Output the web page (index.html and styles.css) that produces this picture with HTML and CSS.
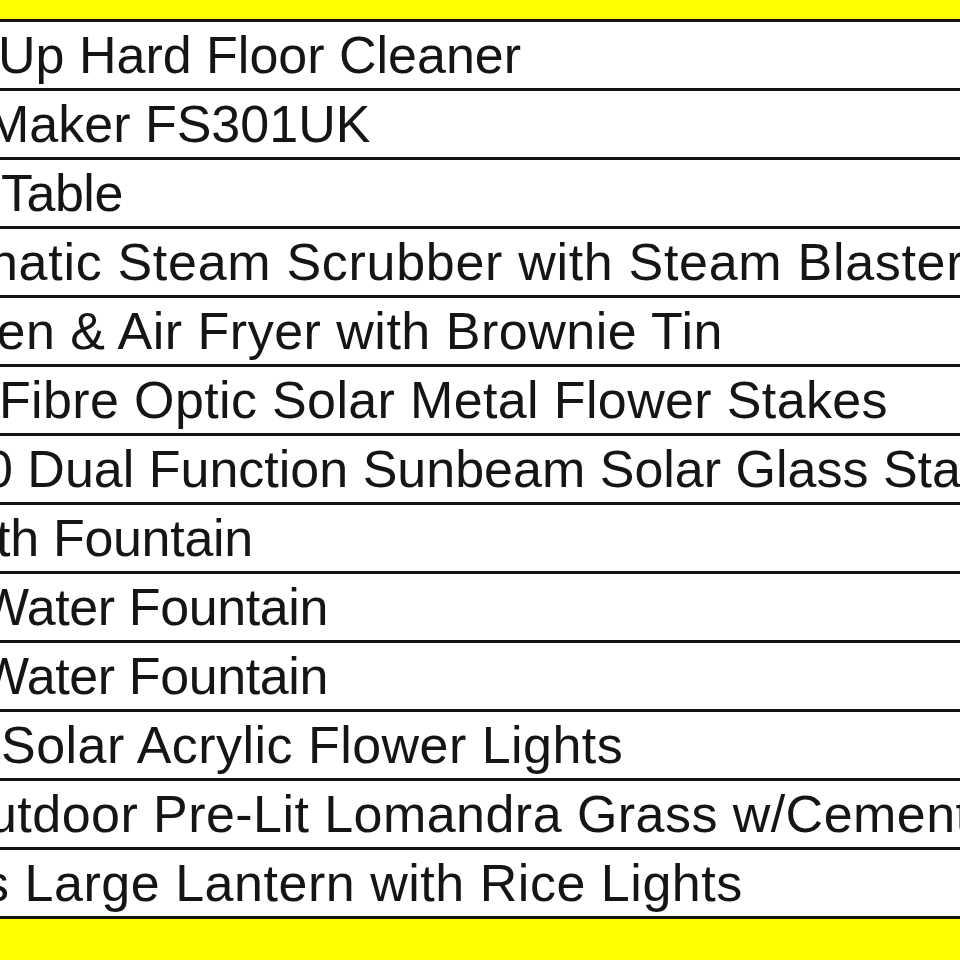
FILE: index.html
```html
<!DOCTYPE html>
<html lang="en">
<head>
<meta charset="utf-8">
<title>Product list</title>
<link rel="stylesheet" href="styles.css">
</head>
<body>
<div class="band band-top"></div>
<div class="list">
  <div class="row"><span class="name o1">Up Hard Floor Cleaner</span></div>
  <div class="row"><span class="name o2">Maker FS301UK</span></div>
  <div class="row"><span class="name o3">Table</span></div>
  <div class="row"><span class="name o4">natic Steam Scrubber with Steam Blaster</span></div>
  <div class="row"><span class="name o5">en &amp; Air Fryer with Brownie Tin</span></div>
  <div class="row"><span class="name o6">Fibre Optic Solar Metal Flower Stakes</span></div>
  <div class="row"><span class="name o7">0 Dual Function Sunbeam Solar Glass Stakes</span></div>
  <div class="row"><span class="name o8">th Fountain</span></div>
  <div class="row"><span class="name o9">Water Fountain</span></div>
  <div class="row"><span class="name o9">Water Fountain</span></div>
  <div class="row"><span class="name o11">Solar Acrylic Flower Lights</span></div>
  <div class="row"><span class="name o12">utdoor Pre-Lit Lomandra Grass w/Cement Pot</span></div>
  <div class="row"><span class="name o13">s Large Lantern with Rice Lights</span></div>
</div>
<div class="band band-bottom"></div>
</body>
</html>
```
FILE: styles.css
```css
html, body {
  margin: 0;
  padding: 0;
  background: #ffff00;
  width: 960px;
  height: 960px;
  overflow: hidden;
}
body {
  display: flex;
  flex-direction: column;
  font-family: "Liberation Sans", Arial, sans-serif;
}
.band-top {
  height: 19px;
  flex: none;
}
.band-bottom {
  flex: 1;
}
.list {
  background: #ffffff;
  border-bottom: 3px solid #141414;
  flex: none;
}
.row {
  height: 66px;
  border-top: 3px solid #141414;
  display: flex;
  align-items: center;
  overflow: hidden;
  white-space: nowrap;
}
.name {
  font-size: 52px;
  line-height: 58px;
  color: #151515;
  flex: none;
}
.o1 { margin-left: -2px; }
.o2 { margin-left: -14px; }
.o3 { margin-left: 1px; letter-spacing: -0.5px; }
.o4 { margin-left: -11px; letter-spacing: 0.7px; }
.o5 { margin-left: -3.5px; letter-spacing: 0.5px; }
.o6 { margin-left: -1px; letter-spacing: 0.36px; }
.o7 { margin-left: -16px; }
.o8 { margin-left: -4px; letter-spacing: -0.3px; }
.o9 { margin-left: -20px; letter-spacing: -0.4px; }
.o11 { margin-left: 1px; letter-spacing: 0.46px; }
.o12 { margin-left: -12px; letter-spacing: 0.45px; }
.o13 { margin-left: -17px; letter-spacing: 0.53px; }
```
